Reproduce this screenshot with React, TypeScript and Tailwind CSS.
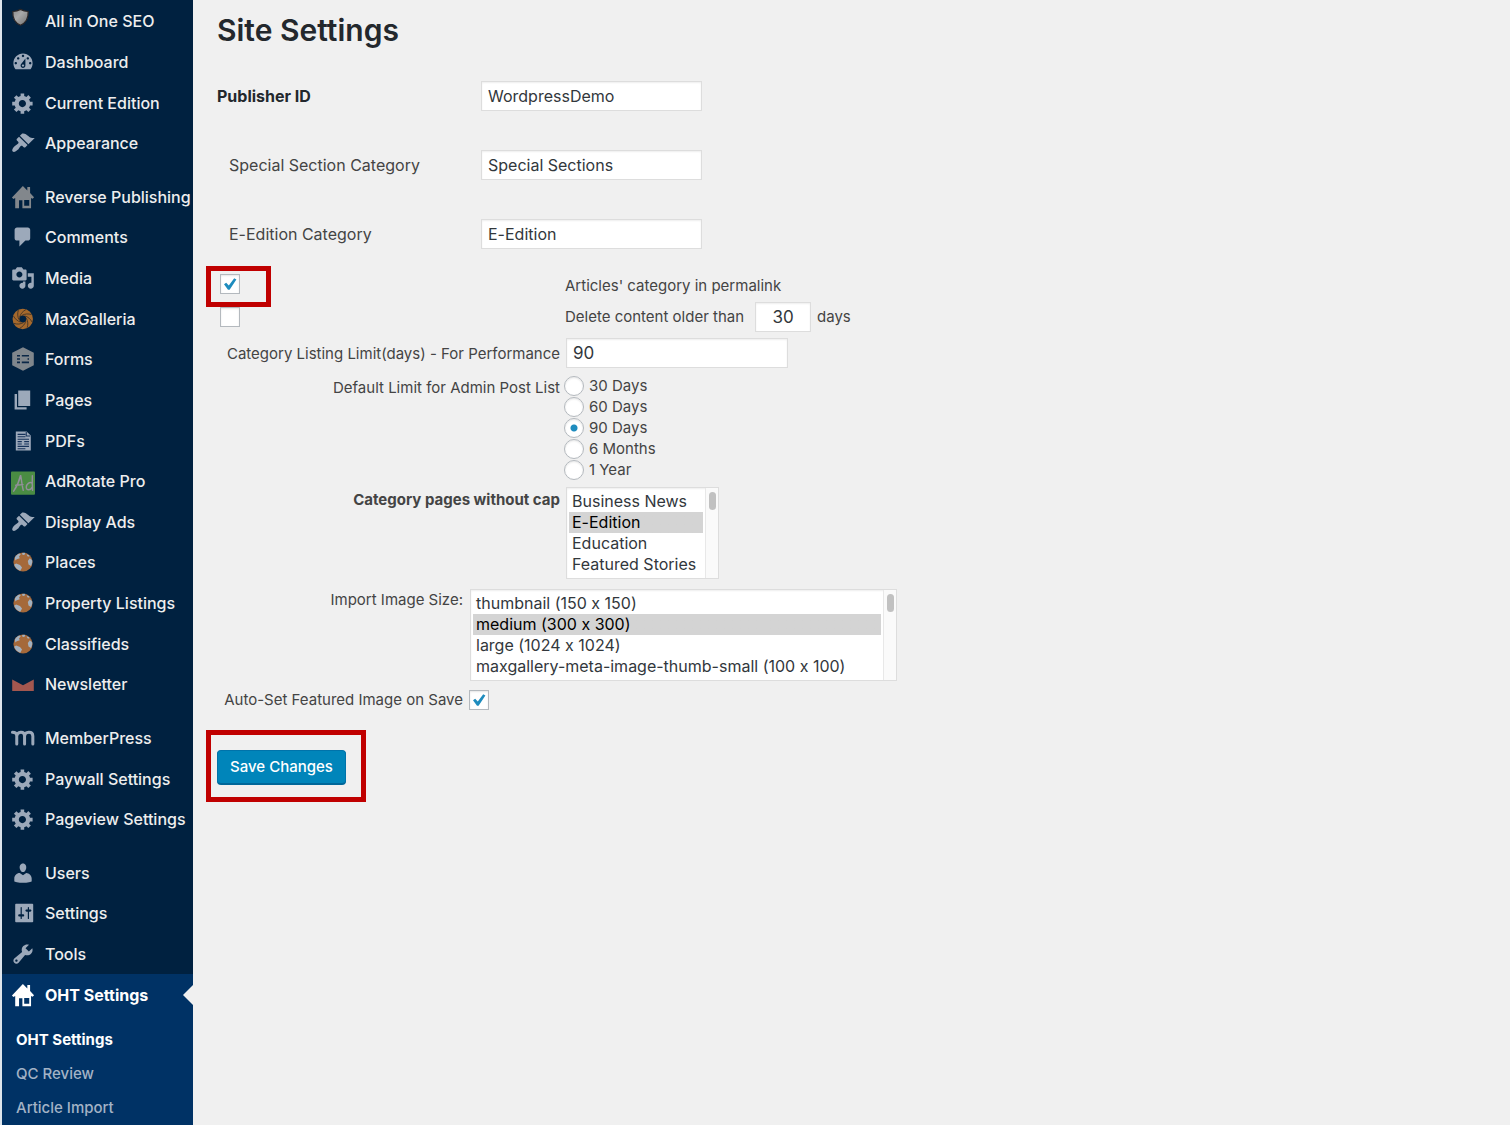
import type { ReactNode } from 'react';

/* Single-path glyphs, all drawn on a 20x20 grid. */
const glyphs = {
  dashboard:
    'M3.76 16h12.48c1.1-1.37 1.76-3.11 1.76-5 0-4.42-3.58-8-8-8s-8 3.58-8 8c0 1.89.66 3.63 1.76 5zM10 4c.55 0 1 .45 1 1s-.45 1-1 1-1-.45-1-1 .45-1 1-1zM6 6c.55 0 1 .45 1 1s-.45 1-1 1-1-.45-1-1 .45-1 1-1zm8 0c.55 0 1 .45 1 1s-.45 1-1 1-1-.45-1-1 .45-1 1-1zm-5.37 5.55L12 7v6c0 1.1-.9 2-2 2s-2-.9-2-2c0-.57.24-1.08.63-1.45zM4 10c.55 0 1 .45 1 1s-.45 1-1 1-1-.45-1-1 .45-1 1-1zm12 0c.55 0 1 .45 1 1s-.45 1-1 1-1-.45-1-1 .45-1 1-1zm-5 3c0-.55-.45-1-1-1s-1 .45-1 1 .45 1 1 1 1-.45 1-1z',
  gear: 'M18 12h-2.18c-.17.7-.44 1.35-.81 1.93l1.54 1.54-2.1 2.1-1.54-1.54c-.58.36-1.23.63-1.91.79V19H8v-2.18c-.68-.16-1.33-.43-1.91-.79l-1.54 1.54-2.12-2.12 1.54-1.54c-.36-.58-.63-1.23-.79-1.91H1V9.03h2.17c.16-.7.44-1.35.8-1.94L2.43 5.55l2.1-2.1 1.54 1.54c.58-.37 1.24-.64 1.93-.81V2h3v2.18c.68.16 1.33.43 1.91.79l1.54-1.54 2.12 2.12-1.54 1.54c.36.59.64 1.24.8 1.94H18V12zm-8.5 1.5c1.66 0 3-1.34 3-3s-1.34-3-3-3-3 1.34-3 3 1.34 3 3 3z',
  brush:
    'M14.48 11.06L7.41 3.99l1.5-1.5c.5-.56 2.3-.47 3.51.32 1.21.8 1.43 1.28 2.91 2.1 1.18.64 2.45 1.26 4.45.85zm-.71.71L6.7 4.7 4.93 6.47c-.39.39-.39 1.02 0 1.41l1.06 1.06c.39.39.39 1.03 0 1.42-.6.6-1.43 1.11-2.21 1.69-.35.26-.7.53-1.01.84C1.43 14.23.4 16.08 1.4 17.07c.99 1 2.84-.03 4.18-1.36.31-.31.58-.66.85-1.02.57-.78 1.08-1.61 1.69-2.21.39-.39 1.02-.39 1.41 0l1.06 1.06c.39.39 1.02.39 1.41 0z',
  house: 'M.8 10.400 9.900.9l3.700 3.600V1.700h2.300v5l3.300 3.500-1.200 1.200-1.300-.6v8.600H9.500v-6.700H6.700v6.700H3.500v-8.600l-1.500.8zM11 12.600v4.700h4.200v-4.700z',
  comment: 'M5 2h9c1.1 0 2 .9 2 2v7c0 1.1-.9 2-2 2h-2l-5 5v-5H5c-1.1 0-2-.9-2-2V4c0-1.1.9-2 2-2z',
  media:
    'M13 11V4c0-.55-.45-1-1-1h-1.67L9 1H5L3.67 3H2c-.55 0-1 .45-1 1v7c0 .55.45 1 1 1h10c.55 0 1-.45 1-1zM7 4.5c1.38 0 2.5 1.12 2.5 2.5S8.38 9.5 7 9.5 4.5 8.38 4.5 7 5.62 4.5 7 4.5zM14 6h5v10.5c0 1.38-1.12 2.5-2.5 2.5S14 17.88 14 16.5s1.12-2.5 2.5-2.5c.17 0 .34.02.5.05V9h-3V6zm-4 8.05V13h2v3.5c0 1.38-1.12 2.5-2.5 2.5S7 17.88 7 16.5 8.12 14 9.5 14c.17 0 .34.02.5.05z',
  pages: 'M6 15V2h10v13H6zm-1 1h8v2H3V5h2v11z',
  users:
    'M10 9.25c-2.27 0-2.73-3.44-2.73-3.44C7 4.02 7.82 2 9.97 2c2.16 0 2.98 2.02 2.71 3.81 0 0-.41 3.44-2.68 3.44zm0 2.57L12.72 10c2.39 0 4.52 2.33 4.52 4.53v2.49s-3.65 1.13-7.24 1.13c-3.65 0-7.24-1.13-7.24-1.13v-2.49c0-2.25 1.94-4.48 4.47-4.48z',
  sliders:
    'M18.500 17V3c0-.4-.3-.7-.7-.7H4.200c-.4 0-.7.3-.7.7v14c0 .4.3.7.7.7h13.600c.4 0 .7-.3.7-.7zM9 11h1c.55 0 1 .45 1 1s-.45 1-1 1H9v1.5c0 .28-.22.5-.5.5s-.5-.22-.5-.5V13H7c-.55 0-1-.45-1-1s.45-1 1-1h1V5.500c0-.28.22-.5.5-.5s.5.22.5.5V11zm5-2h-1c-.55 0-1-.45-1-1s.45-1 1-1h1V5.500c0-.28.22-.5.5-.5s.5.22.5.5V7h1c.55 0 1 .45 1 1s-.45 1-1 1h-1v5.500c0 .28-.22.5-.5.5s-.5-.22-.5-.5V9z',
  wrench:
    'M16.68 9.77c-1.34 1.34-3.3 1.67-4.95.99l-5.41 6.52c-.99.99-2.59.99-3.58 0s-.99-2.59 0-3.57l6.52-5.42c-.68-1.65-.35-3.61.99-4.95 1.28-1.28 3.12-1.62 4.72-1.06l-2.89 2.89 2.82 2.82 2.86-2.87c.53 1.58.18 3.39-1.08 4.65zM3.81 16.21c.4.39 1.04.39 1.43 0 .4-.4.4-1.04 0-1.43-.39-.4-1.03-.4-1.43 0-.39.39-.39 1.03 0 1.43z',
};

function Icon({ children }: { children: ReactNode }) {
  return (
    <svg viewBox="0 0 20 20" className="size-6 shrink-0 overflow-visible" aria-hidden="true">
      {children}
    </svg>
  );
}

function Glyph({ name, fill = '#9ca9ba' }: { name: keyof typeof glyphs; fill?: string }) {
  return (
    <Icon>
      <path d={glyphs[name]} fill={fill} fillRule="evenodd" />
    </Icon>
  );
}

function ShieldIcon() {
  return (
    <Icon>
      <defs>
        <linearGradient id="shield" x1="0" x2="1" y1="0" y2="1">
          <stop offset="0" stopColor="#8a8a8a" />
          <stop offset=".4" stopColor="#a8a8a8" />
          <stop offset="1" stopColor="#6f6f6f" />
        </linearGradient>
      </defs>
      <path
        d="M1.500 2.100C3.800 1.900 6 1.300 7.900.3c1.900 1 4.100 1.600 6.400 1.800.3 5.400-1.300 9.300-6.400 11.500C2.800 11.400 1.200 7.500 1.500 2.100z"
        fill="url(#shield)"
        stroke="#2b2626"
        strokeWidth="1"
      />
    </Icon>
  );
}

function ApertureIcon() {
  return (
    <Icon>
      <circle cx="9.800" cy="10" r="5.700" fill="none" stroke="#a5692c" strokeWidth="5.600" />
      {[0, 45, 90, 135, 180, 225, 270, 315].map(angle => (
        <path
          key={angle}
          d="M7.200 8.400C8 5.500 9.800 3.600 12.400 2.200"
          fill="none"
          stroke="#3f3228"
          strokeWidth=".7"
          transform={`rotate(${angle} 9.800 10)`}
        />
      ))}
    </Icon>
  );
}

function FormsIcon() {
  return (
    <Icon>
      <path d="M10 .2l9 4.600v10.400l-9 4.600-9-4.600V4.800z" fill="#7f868c" />
      <path
        d="M5 6.600h2.500V8H5zm4 0h6V8H9zM5 9.300h2.500v1.400H5zm8.800 0H15v1.400h-1.200zM5 12h2.500v1.500H5zm4 0h6v1.500H9z"
        fill="#0a2747"
      />
    </Icon>
  );
}

function PdfIcon() {
  return (
    <Icon>
      <path d="M4 2h9l3.500 3.500V18H4z" fill="#9ca9ba" />
      <path
        d="M5.500 4.500H12M5.500 6.500H12M5.500 8.500H15M5.500 10.500H9M11 10.500h4M5.500 12.500H9M11 12.500h4M5.500 14.500H15M5.500 16.400H12M12.700 2.500v3.400H16"
        fill="none"
        stroke="#15325a"
        strokeWidth=".9"
      />
    </Icon>
  );
}

function AdIcon() {
  return (
    <Icon>
      <rect y="2" width="20" height="19.500" rx=".8" fill="#4a8c43" />
      <path
        d="M2.200 18.500C5 14.500 7 9.500 8 5.200c.8 3.800 1.200 8.800 2.200 12.600M4 13.600l6-.6M17.800 5.500c-.2 4.300-.2 8 .2 12.300M17.600 11.700c-2-1.400-4.900.8-4.900 3.600 0 2.700 3.700 2.800 4.900-.4"
        fill="none"
        stroke="#92909a"
        strokeWidth="1.200"
        strokeLinecap="round"
      />
    </Icon>
  );
}

function GlobeIcon() {
  return (
    <Icon>
      <circle cx="10" cy="10" r="8" fill="#a5693a" />
      <path
        d="M4.300 11.200l3.200 1.200 1.700 2.200-1.400 2.600C5 16.200 3.200 14.300 2.700 12zM3.200 6.300C4 4.900 5.200 3.700 6.700 3l1.500.6-1.500 1.900.6 1.300-2.500.9-1.200 1zM9.200 2.400l2.700-.2-.6 1.700-1.600.2zM17.700 8.500l-2-1.600-1.700 2.300.6 2.800 2 1.300c.8-1.300 1.300-3 1.100-4.800zM13 3.500l2 .8.300 1.300-1.600-.4z"
        fill="#a3b1bf"
      />
    </Icon>
  );
}

function EnvelopeIcon() {
  return (
    <Icon>
      <path d="M1 6.200l9 4.800 9-4.800v9.600H1z" fill="#a3574f" />
    </Icon>
  );
}

function MemberPressIcon() {
  return (
    <Icon>
      <path
        d="M1.200 5.300c2.600 0 3.600.8 3.600 3v6.600M4.800 8.300C5.200 4.500 11 4 11.300 8v6.900M11.300 8.300c.4-3.800 6.700-4.300 6.900 0v6.600"
        fill="none"
        stroke="#9ca9ba"
        strokeWidth="2.500"
        strokeLinecap="round"
      />
    </Icon>
  );
}

const menu: { label: string; icon: ReactNode }[][] = [
  [
    { label: 'All in One SEO', icon: <ShieldIcon /> },
    { label: 'Dashboard', icon: <Glyph name="dashboard" /> },
    { label: 'Current Edition', icon: <Glyph name="gear" /> },
    { label: 'Appearance', icon: <Glyph name="brush" /> },
  ],
  [
    { label: 'Reverse Publishing', icon: <Glyph name="house" fill="#82878c" /> },
    { label: 'Comments', icon: <Glyph name="comment" /> },
    { label: 'Media', icon: <Glyph name="media" /> },
    { label: 'MaxGalleria', icon: <ApertureIcon /> },
    { label: 'Forms', icon: <FormsIcon /> },
    { label: 'Pages', icon: <Glyph name="pages" /> },
    { label: 'PDFs', icon: <PdfIcon /> },
    { label: 'AdRotate Pro', icon: <AdIcon /> },
    { label: 'Display Ads', icon: <Glyph name="brush" /> },
    { label: 'Places', icon: <GlobeIcon /> },
    { label: 'Property Listings', icon: <GlobeIcon /> },
    { label: 'Classifieds', icon: <GlobeIcon /> },
    { label: 'Newsletter', icon: <EnvelopeIcon /> },
  ],
  [
    { label: 'MemberPress', icon: <MemberPressIcon /> },
    { label: 'Paywall Settings', icon: <Glyph name="gear" /> },
    { label: 'Pageview Settings', icon: <Glyph name="gear" /> },
  ],
  [
    { label: 'Users', icon: <Glyph name="users" /> },
    { label: 'Settings', icon: <Glyph name="sliders" /> },
    { label: 'Tools', icon: <Glyph name="wrench" /> },
    { label: 'OHT Settings', icon: <Glyph name="house" fill="#ffffff" /> },
  ],
];

const submenu = ['OHT Settings', 'QC Review', 'Article Import'];

function Sidebar() {
  return (
    <nav className="flex min-h-screen w-[193px] shrink-0 flex-col border-l-2 border-[#dde5ec] bg-[#002140] pt-px">
      {menu.map((group, i) => (
        <ul key={i} className={i === 0 ? 'contents' : 'contents [&>li:first-child]:mt-[13px]'}>
          {group.map(({ label, icon }) => {
            const active = label === 'OHT Settings';
            return (
              <li key={label} className="flex min-h-10 flex-1">
                <a
                  href="#"
                  className={`relative flex flex-1 items-center gap-2.5 pl-[9px] text-base whitespace-nowrap ${
                    active ? 'bg-[#003265] font-bold text-white' : 'font-medium text-[#eeeeee]'
                  }`}
                >
                  {icon}
                  {label}
                  {active && (
                    <span className="absolute right-0 border-y-[10px] border-r-[10px] border-y-transparent border-r-[#f0f0f0]" />
                  )}
                </a>
              </li>
            );
          })}
        </ul>
      ))}
      <ul className="bg-[#003265] pt-2 text-[15px] leading-[34px]">
        {submenu.map((label, i) => (
          <li key={label}>
            <a
              href="#"
              className={i === 0 ? 'block pl-3.5 font-bold text-white' : 'block pl-3.5 font-medium text-[#a3b3c6]'}
            >
              {label}
            </a>
          </li>
        ))}
      </ul>
    </nav>
  );
}

const field = 'h-[30px] border border-[#dddddd] bg-white px-1.5 text-[#32373c] shadow-[inset_0_1px_2px_rgba(0,0,0,0.07)]';

function TextRow({ id, label, value, strong }: { id: string; label: string; value: string; strong?: boolean }) {
  return (
    <div className="flex items-center text-base">
      <label htmlFor={id} className={strong ? 'w-66 font-bold text-[#23282d]' : 'w-66 pl-3'}>
        {label}
      </label>
      <input id={id} defaultValue={value} className={`${field} w-[221px]`} />
    </div>
  );
}

function Checkbox({ id, label, checked }: { id: string; label?: string; checked?: boolean }) {
  return (
    <span className="grid size-5 shrink-0">
      <input
        id={id}
        type="checkbox"
        aria-label={label}
        defaultChecked={checked}
        className="peer col-start-1 row-start-1 size-5 appearance-none border border-[#b4b9be] bg-white shadow-[inset_0_1px_2px_rgba(0,0,0,0.1)]"
      />
      <svg
        viewBox="0 0 20 20"
        className="pointer-events-none invisible col-start-1 row-start-1 peer-checked:visible"
        aria-hidden="true"
      >
        <path d="M4 10.300l2.200-1.500 2.600 2.600 5.400-7.200 2.200 1.300-6.800 10.300H8z" fill="#1e8cbe" />
      </svg>
    </span>
  );
}

function ListBox({ id, options, selected }: { id: string; options: string[]; selected: string }) {
  return (
    <div className="flex border border-[#dddddd] bg-white shadow-[inset_0_1px_2px_rgba(0,0,0,0.07)]">
      <select
        id={id}
        multiple
        size={4}
        defaultValue={[selected]}
        className="h-[90px] flex-1 overflow-hidden bg-transparent px-0.5 py-[3px] text-base text-[#32373c]"
      >
        {options.map(option => (
          <option
            key={option}
            className="h-[21px] px-[3px] py-0 leading-[21px] checked:bg-[#d4d4d4] checked:bg-linear-to-r checked:from-[#d4d4d4] checked:to-[#d4d4d4] checked:text-black"
          >
            {option}
          </option>
        ))}
      </select>
      <div className="flex w-[13px] justify-center border-l border-[#e8e8e8] bg-[#fafafa] pt-1">
        <span className="h-[18px] w-[7px] rounded-full bg-[#c1c1c1]" />
      </div>
    </div>
  );
}

const limits = ['30 Days', '60 Days', '90 Days', '6 Months', '1 Year'];

export default function App() {
  return (
    <div className="flex min-h-screen bg-[#f0f0f0] font-['Inter','Liberation_Sans',sans-serif] text-[15px] text-[#444444] [font-feature-settings:'calt'_0]">
      <Sidebar />
      <main className="min-w-0 flex-1 pt-3 pl-6">
        <h1 className="text-[30px] leading-9 font-semibold text-[#23282d]">Site Settings</h1>

        <form onSubmit={e => e.preventDefault()}>
          <div className="mt-[33px] flex flex-col gap-[39px]">
            <TextRow id="publisher" label="Publisher ID" value="WordpressDemo" strong />
            <TextRow id="special" label="Special Section Category" value="Special Sections" />
            <TextRow id="edition" label="E-Edition Category" value="E-Edition" />
          </div>

          <div className="mt-[17px] flex items-center">
            {/* Highlight frame hangs over the left edge of the form. */}
            <div className="-ml-[11px] h-[41px] w-[65px] border-[5px] border-[#c00000] pt-[3px] pl-[9px]">
              <Checkbox id="permalink" checked />
            </div>
            <label htmlFor="permalink" className="ml-[294px]">
              Articles' category in permalink
            </label>
          </div>
          <div className="-mt-[5px] flex items-center pl-[3px]">
            <Checkbox id="delete-old" label="Delete content older than" />
            <label htmlFor="days" className="ml-[325px] w-46">
              Delete content older than
            </label>
            <input id="days" defaultValue="30" className={`${field} mx-1.5 w-14 text-center text-[17px]`} />
            days
          </div>

          <div className="mt-1.5 grid grid-cols-[343px_auto] items-start justify-start gap-x-1">
            <label htmlFor="limit" className="text-right leading-8">
              Category Listing Limit(days) - For Performance
            </label>
            <input id="limit" defaultValue="90" className={`${field} ml-0.5 w-[222px] text-[17px]`} />

            <span id="admin-limit" className="mt-1.5 text-right leading-6">
              Default Limit for Admin Post List
            </span>
            <div role="radiogroup" aria-labelledby="admin-limit" className="mt-[5px] leading-[21px]">
              {limits.map(limit => (
                <label key={limit} className="flex h-[21px] items-center gap-[5px]">
                  <input
                    type="radio"
                    name="admin-limit"
                    defaultChecked={limit === '90 Days'}
                    className="size-5 appearance-none rounded-full border border-[#b4b9be] bg-white shadow-[inset_0_1px_2px_rgba(0,0,0,0.1)] checked:bg-[radial-gradient(circle,#1e8cbe_3px,white_4px)]"
                  />
                  {limit}
                </label>
              ))}
            </div>

            <label htmlFor="no-cap" className="mt-2 text-right leading-6 font-bold">
              Category pages without cap
            </label>
            <div className="mt-[7px] ml-0.5 w-[153px]">
              <ListBox
                id="no-cap"
                options={['Business News', 'E-Edition', 'Education', 'Featured Stories']}
                selected="E-Edition"
              />
            </div>
          </div>

          <div className="mt-2.5 grid grid-cols-[246px_auto] items-start justify-start gap-x-1.5">
            <label htmlFor="image-size" className="text-right leading-[22px]">
              Import Image Size:
            </label>
            <div className="ml-px w-[427px]">
              <ListBox
                id="image-size"
                options={[
                  'thumbnail (150 x 150)',
                  'medium (300 x 300)',
                  'large (1024 x 1024)',
                  'maxgallery-meta-image-thumb-small (100 x 100)',
                ]}
                selected="medium (300 x 300)"
              />
            </div>
            <label htmlFor="auto-set" className="mt-2 text-right leading-[22px]">
              Auto-Set Featured Image on Save
            </label>
            <div className="mt-[9px]">
              <Checkbox id="auto-set" checked />
            </div>
          </div>

          <div className="mt-[19px] -ml-[11px] h-[72px] w-[160px] border-[5px] border-[#c00000] pt-[15px] pl-1.5">
            <button
              type="submit"
              className="h-[34px] w-[129px] rounded border border-[#0073aa] border-b-[#006799] bg-[#0085ba] text-[15px] font-medium text-white shadow-[0_1px_0_#006799]"
            >
              Save Changes
            </button>
          </div>
        </form>
      </main>
    </div>
  );
}
